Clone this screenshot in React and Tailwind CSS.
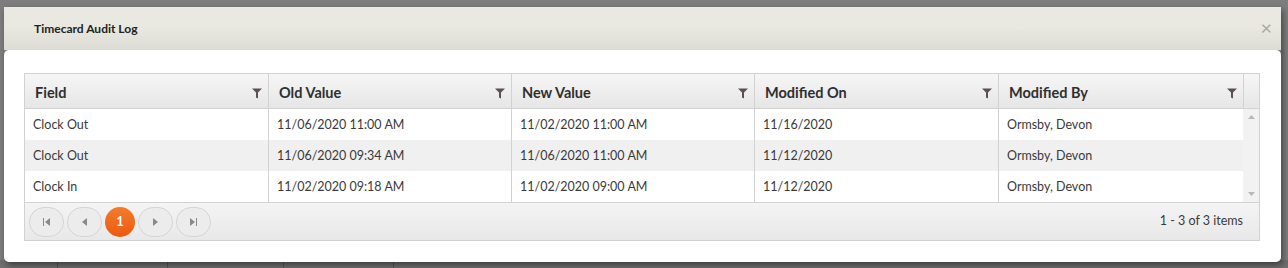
const COLUMNS = ['Field', 'Old Value', 'New Value', 'Modified On', 'Modified By'];

const ROWS = [
  ['Clock Out', '11/06/2020 11:00 AM', '11/02/2020 11:00 AM', '11/16/2020', 'Ormsby, Devon'],
  ['Clock Out', '11/06/2020 09:34 AM', '11/06/2020 11:00 AM', '11/12/2020', 'Ormsby, Devon'],
  ['Clock In', '11/02/2020 09:18 AM', '11/02/2020 09:00 AM', '11/12/2020', 'Ormsby, Devon'],
];

const COLS = 'grid grid-cols-[244px_243px_243px_244px_244px]';

function FilterIcon() {
  return (
    <svg width="10" height="11" viewBox="0 0 10 11" className="shrink-0 mt-[2px]">
      <path d="M0 0.5h10L6 4.5v6L4 9.5v-5z" fill="#5b5150" />
    </svg>
  );
}

function PagerButton({ children }) {
  return (
    <div className="w-[35px] h-[30px] rounded-full border border-[#d5d5d5] bg-[#ececec] flex items-center justify-center">
      {children}
    </div>
  );
}

function Tri({ dir }) {
  const d = dir === 'left' ? 'M5 0v8L0 4z' : 'M0 0v8l5-4z';
  return (
    <svg width="5" height="8" viewBox="0 0 5 8">
      <path d={d} fill="#8a8a8a" />
    </svg>
  );
}

export default function App() {
  return (
    <div className="relative w-[1288px] h-[268px] bg-[#7d7d7d] overflow-hidden" style={{ fontFamily: 'Lato, "Open Sans", sans-serif' }}>
      {/* page behind the dialog */}
      <div className="absolute left-0 right-0 bottom-0 h-[8px] bg-[#6e6e6e] flex">
        <div className="w-[58px] border-r border-[#555]" />
        <div className="w-[110px] border-r border-[#555]" />
        <div className="w-[116px] border-r border-[#555]" />
        <div className="w-[110px] border-r border-[#555]" />
      </div>

      {/* dialog */}
      <div className="absolute left-[4px] top-[7px] w-[1277px] h-[255px] flex flex-col shadow-[2px_3px_6px_rgba(0,0,0,0.45)] rounded-b-[5px]">
        <div className="h-[43px] shrink-0 bg-gradient-to-b from-[#eaeae3] via-[#e8e8e0] to-[#dcdcd4] flex items-center justify-between pl-[30px] pr-[9px]">
          <span className="text-[12px] font-bold text-[#222]">Timecard Audit Log</span>
          <span className="text-[20px] leading-none text-[#a8a8a8] -mt-[4px]">×</span>
        </div>

        <div className="flex-1 bg-white rounded-[5px] pt-[23px] px-[20px]">
          <div className="border border-[#d2d2d2] w-[1236px]">
            {/* header */}
            <div className="flex bg-gradient-to-b from-[#f6f6f6] to-[#e6e6e6] border-b border-[#d2d2d2] h-[35px]">
              <div className={COLS}>
                {COLUMNS.map((c, i) => (
                  <div key={c} className={`flex items-center justify-between pt-[3px] pl-[10px] pr-[6px] ${i < 4 ? 'border-r border-[#d2d2d2]' : ''}`}>
                    <span className="text-[14.5px] font-bold text-[#2f2f2f]">{c}</span>
                    <FilterIcon />
                  </div>
                ))}
              </div>
              <div className="flex-1 border-l border-[#d2d2d2]" />
            </div>

            {/* body */}
            <div className="flex">
              <div className="flex flex-col">
                {ROWS.map((r, ri) => (
                  <div key={ri} className={`${COLS} h-[31px] ${ri === 1 ? 'bg-[#f0f0f0]' : 'bg-white'}`}>
                    {r.map((cell, i) => (
                      <div key={i} className={`flex items-center pt-[2px] pl-[8px] text-[12.5px] text-[#3a3a3a] ${i < 4 ? 'border-r border-[#d2d2d2]' : ''}`}>
                        {cell}
                      </div>
                    ))}
                  </div>
                ))}
              </div>
              <div className="flex-1 bg-[#f2f2f2] flex flex-col items-center justify-between py-[6px]">
                <svg width="7" height="4" viewBox="0 0 7 4"><path d="M0 4L3.5 0L7 4z" fill="#b8b8b8" /></svg>
                <svg width="7" height="4" viewBox="0 0 7 4"><path d="M0 0L3.5 4L7 0z" fill="#b8b8b8" /></svg>
              </div>
            </div>

            {/* pager */}
            <div className="h-[38px] border-t border-[#d2d2d2] bg-gradient-to-b from-[#f4f4f4] to-[#e8e8e8] flex items-center justify-between pl-[4px] pr-[16px]">
              <div className="flex items-center gap-[3px]">
                <PagerButton>
                  <div className="flex items-center"><div className="w-[1px] h-[8px] bg-[#8a8a8a] mr-[1px]" /><Tri dir="left" /></div>
                </PagerButton>
                <PagerButton><Tri dir="left" /></PagerButton>
                <div className="w-[30px] h-[30px] rounded-full bg-gradient-to-b from-[#f47a2a] to-[#ec5a0c] flex items-center justify-center text-white text-[13px] font-bold">1</div>
                <PagerButton><Tri dir="right" /></PagerButton>
                <PagerButton>
                  <div className="flex items-center"><Tri dir="right" /><div className="w-[1px] h-[8px] bg-[#8a8a8a] ml-[1px]" /></div>
                </PagerButton>
              </div>
              <span className="text-[12.5px] text-[#3a3a3a]">1 - 3 of 3 items</span>
            </div>
          </div>
        </div>
      </div>
    </div>
  );
}
